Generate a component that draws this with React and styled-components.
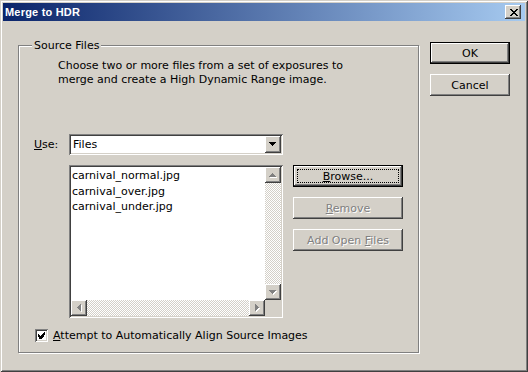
import styled, { createGlobalStyle } from 'styled-components';

const GlobalStyle = createGlobalStyle`
  html, body {
    margin: 0;
    padding: 0;
    background: #d4d0c8;
  }
  body {
    font-family: "DejaVu Sans", Verdana, sans-serif;
    font-size: 11px;
    color: #000;
  }
`;

const face = '#d4d0c8';

const raised = `
  background: ${face};
  box-shadow: inset -1px -1px #404040, inset 1px 1px #fff,
    inset -2px -2px #808080, inset 2px 2px ${face};
`;

const sunken = `
  box-shadow: inset 1px 1px #808080, inset -1px -1px #fff,
    inset 2px 2px #404040, inset -2px -2px ${face};
`;

const Window = styled.div`
  width: 528px;
  height: 372px;
  box-sizing: border-box;
  padding: 3px;
  background: ${face};
  box-shadow: inset 1px 1px ${face}, inset -1px -1px #404040,
    inset 2px 2px #fff, inset -2px -2px #808080;
  display: flex;
  flex-direction: column;
`;

const TitleBar = styled.div`
  height: 18px;
  flex: none;
  display: flex;
  align-items: center;
  justify-content: space-between;
  padding: 0 4px 0 2px;
  background: linear-gradient(to right, #0a246a, #a6caf0);
`;

const Title = styled.span`
  color: #fff;
  font-family: "Liberation Sans", Arial, sans-serif;
  font-weight: bold;
  font-size: 11px;
  letter-spacing: 0.2px;
`;

const CloseButton = styled.div`
  width: 16px;
  height: 14px;
  ${raised}
  display: flex;
  align-items: center;
  justify-content: center;
  padding-left: 1px;
  box-sizing: border-box;
`;

const Body = styled.div`
  display: flex;
  align-items: flex-start;
  padding-left: 15px;
`;

const GroupBox = styled.div`
  position: relative;
  margin-top: 24px;
  width: 401px;
  height: 308px;
  box-sizing: border-box;
  border: 1px solid #808080;
  box-shadow: inset 1px 1px #fff, 1px 1px #fff;
  padding: 13px 0 0 15px;
`;

const Caption = styled.span`
  position: absolute;
  top: -7px;
  left: 13px;
  padding: 0 2px;
  line-height: 13px;
  background: ${face};
`;

const Description = styled.p`
  margin: 0 0 0 24px;
  line-height: 14px;
`;

const UseRow = styled.div`
  display: flex;
  align-items: center;
  margin-top: 47px;
`;

const FieldLabel = styled.span`
  width: 35px;
  flex: none;
`;

const Combo = styled.div`
  width: 214px;
  height: 21px;
  box-sizing: border-box;
  padding: 2px;
  background: #fff;
  ${sunken}
  display: flex;
  align-items: center;
`;

const ComboText = styled.span`
  flex: 1;
  padding-left: 2px;
`;

const ScrollButton = styled.div`
  width: ${p => p.$w || 16}px;
  height: ${p => p.$h || 16}px;
  flex: none;
  box-sizing: border-box;
  ${raised}
  display: flex;
  align-items: center;
  justify-content: center;
`;

const ListRow = styled.div`
  display: flex;
  gap: 10px;
  margin: 10px 0 0 35px;
`;

const ListBox = styled.div`
  width: 214px;
  height: 153px;
  box-sizing: border-box;
  padding: 2px;
  background: #fff;
  ${sunken}
  display: grid;
  grid-template-columns: 1fr 16px;
  grid-template-rows: 1fr 16px;
`;

const Items = styled.div`
  padding: 1px 0 0 1px;
  line-height: 15.5px;
  overflow: hidden;
`;

const Track = styled.div`
  flex: 1;
  background: repeating-conic-gradient(#fff 0 25%, ${face} 0 50%) 0 0 / 2px 2px;
`;

const VScroll = styled.div`
  display: flex;
  flex-direction: column;
`;

const HScroll = styled.div`
  display: flex;
`;

const Corner = styled.div`
  background: ${face};
`;

const ButtonColumn = styled.div`
  display: flex;
  flex-direction: column;
  gap: ${p => p.$gap}px;
  margin: ${p => p.$margin || 0};
`;

const Button = styled.div`
  position: relative;
  width: ${p => p.$w}px;
  height: 22px;
  box-sizing: border-box;
  ${raised}
  display: flex;
  align-items: center;
  justify-content: center;
  color: ${p => (p.$disabled ? '#808080' : '#000')};
  text-shadow: ${p => (p.$disabled ? '1px 1px #fff' : 'none')};
  ${p =>
    p.$default &&
    `
    border: 1px solid #000;
    box-shadow: inset -1px -1px #404040, inset 1px 1px #fff,
      inset -2px -2px #808080;
  `}
  ${p => p.$focus && 'outline: 1px dotted #000; outline-offset: -5px;'}
`;

const CheckRow = styled.label`
  display: flex;
  align-items: center;
  gap: 5px;
  margin: 11px 0 0 1px;
`;

const CheckBox = styled.span`
  width: 13px;
  height: 13px;
  box-sizing: border-box;
  background: #fff;
  ${sunken}
  display: flex;
  align-items: center;
  justify-content: center;
`;

const arrowPaths = {
  up: 'M3 0h1v1h-1z M2 1h3v1h-3z M1 2h5v1h-5z M0 3h7v1h-7z',
  down: 'M0 0h7v1h-7z M1 1h5v1h-5z M2 2h3v1h-3z M3 3h1v1h-1z',
  left: 'M3 0h1v7h-1z M2 1h1v5h-1z M1 2h1v3h-1z M0 3h1v1h-1z',
  right: 'M0 0h1v7h-1z M1 1h1v5h-1z M2 2h1v3h-1z M3 3h1v1h-1z'
};

const Arrow = ({ dir, disabled }) => {
  const flat = dir === 'up' || dir === 'down';
  const w = flat ? 8 : 5;
  const h = flat ? 5 : 8;
  return (
    <svg width={w} height={h} shapeRendering="crispEdges">
      {disabled && (
        <path d={arrowPaths[dir]} fill="#fff" transform="translate(1 1)" />
      )}
      <path d={arrowPaths[dir]} fill={disabled ? '#808080' : '#000'} />
    </svg>
  );
};

const CloseGlyph = () => (
  <svg width="8" height="7" shapeRendering="crispEdges">
    <path
      d="M0 0h2v1h-2z M6 0h2v1h-2z M1 1h2v1h-2z M5 1h2v1h-2z M2 2h4v1h-4z M3 3h2v1h-2z M2 4h4v1h-4z M1 5h2v1h-2z M5 5h2v1h-2z M0 6h2v1h-2z M6 6h2v1h-2z"
      fill="#000"
    />
  </svg>
);

const CheckGlyph = () => (
  <svg width="7" height="7" shapeRendering="crispEdges">
    <path
      d="M6 0h1v3h-1z M5 1h1v4h-1z M4 2h1v4h-1z M0 2h1v3h-1z M1 3h1v4h-1z M2 4h1v3h-1z M3 3h1v4h-1z"
      fill="#000"
    />
  </svg>
);

const files = ['carnival_normal.jpg', 'carnival_over.jpg', 'carnival_under.jpg'];

const App = () => (
  <>
    <GlobalStyle />
    <Window>
      <TitleBar>
        <Title>Merge to HDR</Title>
        <CloseButton>
          <CloseGlyph />
        </CloseButton>
      </TitleBar>
      <Body>
        <GroupBox>
          <Caption>Source Files</Caption>
          <Description>
            Choose two or more files from a set of exposures to
            <br />
            merge and create a High Dynamic Range image.
          </Description>
          <UseRow>
            <FieldLabel>
              <u>U</u>se:
            </FieldLabel>
            <Combo>
              <ComboText>Files</ComboText>
              <ScrollButton $h={17}>
                <Arrow dir="down" />
              </ScrollButton>
            </Combo>
          </UseRow>
          <ListRow>
            <ListBox>
              <Items>
                {files.map(f => (
                  <div key={f}>{f}</div>
                ))}
              </Items>
              <VScroll>
                <ScrollButton>
                  <Arrow dir="up" disabled />
                </ScrollButton>
                <Track />
                <ScrollButton>
                  <Arrow dir="down" disabled />
                </ScrollButton>
              </VScroll>
              <HScroll>
                <ScrollButton>
                  <Arrow dir="left" disabled />
                </ScrollButton>
                <Track />
                <ScrollButton>
                  <Arrow dir="right" disabled />
                </ScrollButton>
              </HScroll>
              <Corner />
            </ListBox>
            <ButtonColumn $gap={10}>
              <Button $w={110} $default $focus>
                <span>
                  <u>B</u>rowse...
                </span>
              </Button>
              <Button $w={110} $disabled>
                <span>
                  <u>R</u>emove
                </span>
              </Button>
              <Button $w={110} $disabled>
                <span>
                  Add Open <u>F</u>iles
                </span>
              </Button>
            </ButtonColumn>
          </ListRow>
          <CheckRow>
            <CheckBox>
              <CheckGlyph />
            </CheckBox>
            <span>
              <u>A</u>ttempt to Automatically Align Source Images
            </span>
          </CheckRow>
        </GroupBox>
        <ButtonColumn $gap={10} $margin="21px 0 0 11px">
          <Button $w={80} $default>
            OK
          </Button>
          <Button $w={80}>Cancel</Button>
        </ButtonColumn>
      </Body>
    </Window>
  </>
);

export default App;
